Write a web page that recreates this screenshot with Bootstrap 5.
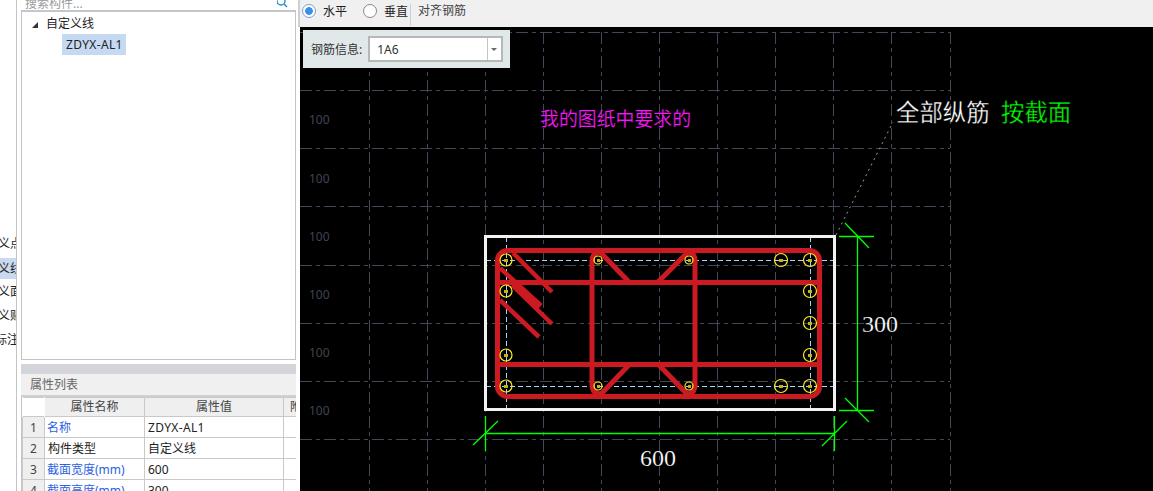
<!DOCTYPE html>
<html lang="zh-CN">
<head>
  <meta charset="UTF-8" />
  <title>自定义线</title>
  <link href="https://cdn.jsdelivr.net/npm/bootstrap@5.3.0/dist/css/bootstrap.min.css" rel="stylesheet"/>
  <style>
    html, body { height: 491px; overflow: hidden; }
    body { font: 12px/1.2 "Noto Sans", "Noto Sans CJK SC", sans-serif; color: #222; background: #fff; }
    .app-wrap { height: 491px; }
    .side-col { width: 300px; flex: none; }
    .kind-strip { width: 17px; flex: none; border-right: 1px solid #c4c4c4; padding-top: 232px; overflow: hidden; white-space: nowrap; }
    .kind-item { height: 24px; line-height: 24px; margin-left: -26px; }
    .kind-item.on { background: #c8d9f0; height: 21px; line-height: 21px; margin-top: 2px; margin-bottom: 1px; }
    .kind-item.tail { margin-left: -29px; }
    .side-main { width: 275px; margin-left: 4px; flex: none; }
    .search-box { height: 12px; overflow: hidden; border-bottom: 2px solid #c3c7cb; line-height: 7px; padding-left: 4px; color: #999; }
    .tree-box { height: 348px; border: 1px solid #c4c4c4; border-top: 0; padding-top: 1px; }
    .tree-top { height: 21px; line-height: 21px; padding-left: 10px; }
    .tree-arrow { border-style: solid; border-width: 0 0 6px 6px; border-color: transparent transparent #333 transparent; margin-right: 8px; display: inline-block; }
    .tree-leaf { height: 21px; line-height: 21px; margin-left: 40px; width: 64px; padding-left: 4px; background: #c6d9f2; }
    .lat-txt { letter-spacing: .35px; }
    .gap-bar { height: 10px; margin-top: 4px; background: #d4d5da; }
    .prop-title { height: 23px; line-height: 21px; padding-left: 9px; background: #f0f0f0; color: #666; border-bottom: 2px solid #d0d0d0; }
    .prop-wrap { overflow: hidden; border-left: 1px solid #c4c4c4; }
    .prop-table { width: 300px; table-layout: fixed; margin: 0; border-color: #c9c9c9; font-size: 12px; }
    .prop-table > :not(caption) > * > * { padding: 1px 3px 0; height: 21px; line-height: 19px; box-shadow: none; color: #222; background: #fff; }
    .prop-table thead th { font-weight: 400; text-align: center; background: #efefef; color: #444; height: 19px; padding-top: 0; line-height: 18px; overflow: hidden; white-space: nowrap; }
    .prop-table thead th.blank-th { background: #fff; border-color: #fff; }
    .prop-table thead th.clip-th { text-align: left; padding-left: 6px; }
    .prop-table td.row-no { background: #efefef; text-align: center; color: #444; }
    .prop-table td.blue-name { color: #2b62e0; padding-left: 2px; }
    .tool-bar { height: 27px; background: #f0f0f0; border-left: 2px solid #cfcfcf; padding-left: 2px; margin-left: -2px; }
    .tool-bar .form-check { min-height: 0; padding: 0; margin: 0; }
    .tool-bar .form-check-input { float: none; margin: 0 7px 0 0; width: 14px; height: 14px; border: 1px solid #888; background: #fff; vertical-align: -2px; }
    .tool-bar .form-check-input:checked { background: radial-gradient(circle, #3b8df0 0 3.5px, #fff 4.2px); border-color: #7a9fc8; }
    .tool-sep { width: 1px; height: 22px; background: #cfcfcf; margin: 0 7px 0 2px; }
    .tool-link { color: #444; }
    .draw-area { position: relative; flex: 1 1 auto; background: #000; overflow: hidden; }
    .draw-svg { display: block; width: 853px; height: 464px; }
    .info-panel { position: absolute; left: 3px; top: 3px; width: 207px; height: 38px; background: #e1e8ea; padding-left: 8px; color: #333; }
    .info-panel label { padding-top: 2px; }
    .info-select { width: 135px; height: 26px; margin-left: 6px; padding: 2px 0 0 7px; font-size: 12px; line-height: 20px; border: 2px solid #b6b8b8; border-radius: 0; color: #333; background-color: #fff;
      background-image: url("data:image/svg+xml,%3csvg xmlns='http://www.w3.org/2000/svg' width='14' height='22'%3e%3cpath d='M.5 0V22' stroke='%23c4c4c4'/%3e%3cpath d='M4 10h6l-3 3z' fill='%23666'/%3e%3c/svg%3e");
      background-position: right 0 center; background-size: 14px 22px; }
    .gl { stroke: #414857; stroke-width: 1; stroke-dasharray: 12 4 4 4; fill: none; }
    .lbl { fill: #3f4552; font: 12px "Noto Sans", sans-serif; }
    .frame { fill: none; stroke: #f2f2f2; stroke-width: 3; }
    .rb { fill: none; stroke: #cc1a22; stroke-width: 5; stroke-linecap: butt; }
    .bl { stroke: #a6d4fa; stroke-width: 1; stroke-dasharray: 5 3; }
    .yc { fill: none; stroke: #ffec20; stroke-width: 1.2; }
    .yd { fill: #c4b418; }
    .gr { stroke: #0f0; stroke-width: 1.3; fill: none; }
    .ld { stroke: #9a9a9a; stroke-width: 1; stroke-dasharray: 2 4; }
    .num { fill: #fff; font: 24px "Liberation Serif", serif; stroke: #000; stroke-width: .2; }
    .cn { font: 23.4px "Noto Sans CJK SC", sans-serif; stroke: #000; stroke-width: .3; }
    .cn-note { font: 18.9px "Noto Sans CJK SC", sans-serif; fill: #f418f4; stroke: #000; stroke-width: .15; }
  </style>
</head>
<body>
  <div class="app-wrap d-flex">
    <div class="side-col d-flex">
      <div class="kind-strip">
        <div class="kind-item">自定义点</div>
        <div class="kind-item on">自定义线</div>
        <div class="kind-item">自定义面</div>
        <div class="kind-item">自定义贴</div>
        <div class="kind-item tail">尺寸标注</div>
      </div>
      <div class="side-main">
        <div class="search-box d-flex justify-content-between">
          <span>搜索构件...</span>
          <svg class="me-2" width="11" height="11" viewBox="0 0 11 11"><circle cx="4" cy="1" r="4" fill="none" stroke="#2a8fc0" stroke-width="1.4"/><path d="M7 4l3 3" stroke="#2a8fc0" stroke-width="1.4"/></svg>
        </div>
        <div class="tree-box">
          <div class="tree-top"><span class="tree-arrow"></span>自定义线</div>
          <div class="tree-leaf lat-txt">ZDYX-AL1</div>
        </div>
        <div class="gap-bar"></div>
        <div class="prop-title">属性列表</div>
        <div class="prop-wrap">
          <table class="table table-bordered prop-table">
            <colgroup><col style="width:22px"><col style="width:100px"><col style="width:139px"><col></colgroup>
            <thead>
              <tr><th class="blank-th"></th><th>属性名称</th><th>属性值</th><th class="clip-th">附加</th></tr>
            </thead>
            <tbody>
              <tr><td class="row-no">1</td><td class="blue-name">名称</td><td class="lat-txt">ZDYX-AL1</td><td></td></tr>
              <tr><td class="row-no">2</td><td>构件类型</td><td>自定义线</td><td></td></tr>
              <tr><td class="row-no">3</td><td class="blue-name">截面宽度(mm)</td><td>600</td><td></td></tr>
              <tr><td class="row-no">4</td><td class="blue-name">截面高度(mm)</td><td>300</td><td></td></tr>
            </tbody>
          </table>
        </div>
      </div>
    </div>
    <div class="d-flex flex-column flex-grow-1">
      <div class="tool-bar d-flex align-items-start pt-1">
        <div class="form-check"><input class="form-check-input" type="radio" name="dir" id="dirH" checked><label for="dirH">水平</label></div>
        <div class="form-check ms-3"><input class="form-check-input" type="radio" name="dir" id="dirV"><label for="dirV">垂直</label></div>
        <div class="tool-sep"></div>
        <span class="tool-link">对齐钢筋</span>
      </div>
      <div class="draw-area">
        <svg class="draw-svg" viewBox="300 27 853 464" xmlns="http://www.w3.org/2000/svg">
          <g class="gl">
            <path d="M300 32.5H950M300 90.5H950M300 148.5H950M300 206.5H950M300 265.5H950M300 323.5H950M300 381.5H950M300 439.5H950"/>
            <path d="M369.5 32V491M427.5 32V491M485.5 32V491M543.5 32V491M601.5 32V491M659.5 32V491M717.5 32V491M775.5 32V491M833.5 32V491M891.5 32V491M950.5 32V491"/>
          </g>
          <g class="lbl">
            <text x="309" y="124">100</text><text x="309" y="183">100</text><text x="309" y="241">100</text>
            <text x="309" y="299">100</text><text x="309" y="357">100</text><text x="309" y="415">100</text>
          </g>
          <path class="bl" d="M486 260.5H834M486 386.5H834M506.5 237V410M810.5 237V410"/>
          <g class="rb">
            <rect x="497.5" y="250.5" width="322" height="146" rx="10"/>
            <path d="M500 282.5H819M500 364.5H819"/>
            <path d="M592 262Q592 252 600 252L629 282M592 262V384Q592 394 601 394L630 364"/>
            <path d="M695 262Q695 252 688 252L658 282M695 262V384Q695 394 687 394L658 364"/>
            <path d="M513 253L552 292M500 268L540 305M512 285L552 324M500 300L539 337" stroke-width="4.5"/>
            <path d="M515 285L540 307" stroke-width="8"/>
          </g>
          <g class="yc">
            <circle cx="506" cy="260" r="6"/><circle cx="506" cy="291" r="6"/><circle cx="506" cy="355" r="6"/><circle cx="506" cy="386" r="6"/>
            <circle cx="598" cy="260" r="4"/><circle cx="598" cy="386" r="4"/><circle cx="689" cy="260" r="4"/><circle cx="689" cy="386" r="4"/>
            <circle cx="781" cy="260" r="6.5"/><circle cx="810" cy="260" r="6.5"/><circle cx="810" cy="291" r="6.5"/><circle cx="810" cy="323" r="6.5"/><circle cx="810" cy="355" r="6.5"/><circle cx="810" cy="386" r="6.5"/><circle cx="781" cy="386" r="6.5"/>
          </g>
          <g class="yd">
            <rect x="504" y="259" width="4" height="3"/><rect x="504" y="290" width="4" height="3"/><rect x="504" y="354" width="4" height="3"/><rect x="504" y="385" width="4" height="3"/>
            <rect x="597" y="259" width="3" height="3"/><rect x="597" y="385" width="3" height="3"/><rect x="688" y="259" width="3" height="3"/><rect x="688" y="385" width="3" height="3"/>
            <rect x="779" y="259" width="4" height="3"/><rect x="808" y="259" width="4" height="3"/><rect x="808" y="290" width="4" height="3"/><rect x="808" y="322" width="4" height="3"/><rect x="808" y="354" width="4" height="3"/><rect x="808" y="385" width="4" height="3"/><rect x="779" y="385" width="4" height="3"/>
          </g>
          <rect class="frame" x="485.5" y="236.5" width="349" height="173"/>
          <g class="gr">
            <path d="M857.5 236V410M839 236.5H874M839 410.5H874M845 223L869 248M845 398L869 422"/>
            <path d="M485 433.5H834M485.5 416V451M834.5 416V451M473 445L498 421M822 446L847 421"/>
          </g>
          <path class="ld" d="M836 235L893 122"/>
          <text class="num" x="640" y="466">600</text>
          <text class="num" x="862" y="332">300</text>
          <text class="cn" x="896" y="121" fill="#fff">全部纵筋</text>
          <text class="cn" x="1001" y="121" fill="#0f0">按截面</text>
          <text class="cn-note" x="540" y="126">我的图纸中要求的</text>
        </svg>
        <div class="info-panel d-flex align-items-center">
          <label for="barInfo">钢筋信息:</label>
          <select id="barInfo" class="form-select info-select"><option>1A6</option></select>
        </div>
      </div>
    </div>
  </div>
  <script src="https://cdn.jsdelivr.net/npm/bootstrap@5.3.0/dist/js/bootstrap.bundle.min.js"></script>
</body>
</html>
